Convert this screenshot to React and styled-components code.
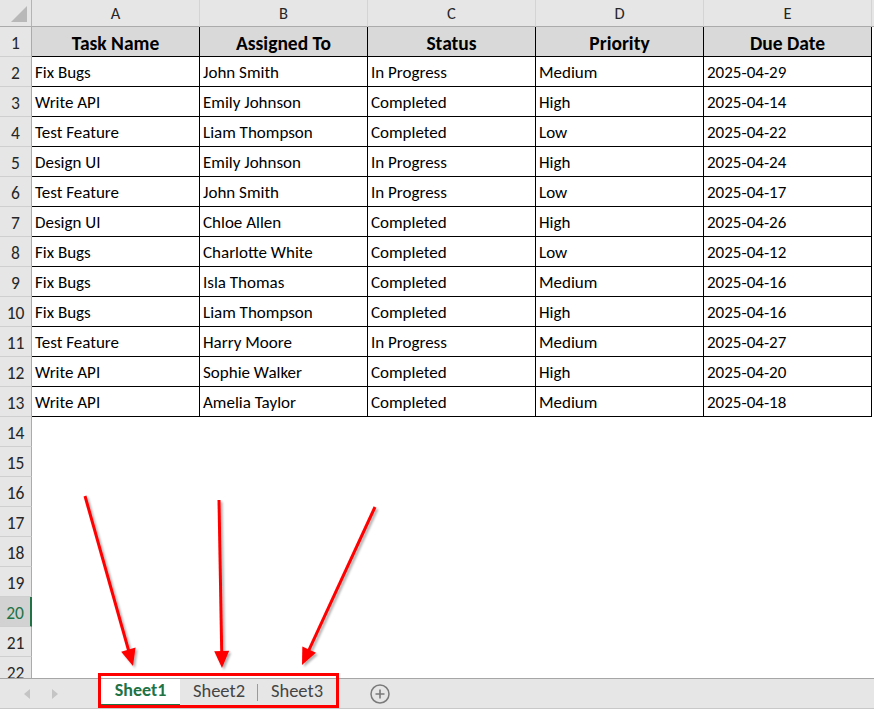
import React from "react";
import styled, {createGlobalStyle} from "styled-components";

const GlobalStyle = createGlobalStyle`
  html, body {
    margin: 0;
    padding: 0;
    background: #ffffff;
    overflow: hidden;
  }
  * {
    box-sizing: border-box;
  }
`;

const FONT = `Calibri, Carlito, Lato, "Noto Sans", sans-serif`;

const columns = ["A", "B", "C", "D", "E"];
const headers = ["Task Name", "Assigned To", "Status", "Priority", "Due Date"];

const rows = [
    ["Fix Bugs", "John Smith", "In Progress", "Medium", "2025-04-29"],
    ["Write API", "Emily Johnson", "Completed", "High", "2025-04-14"],
    ["Test Feature", "Liam Thompson", "Completed", "Low", "2025-04-22"],
    ["Design UI", "Emily Johnson", "In Progress", "High", "2025-04-24"],
    ["Test Feature", "John Smith", "In Progress", "Low", "2025-04-17"],
    ["Design UI", "Chloe Allen", "Completed", "High", "2025-04-26"],
    ["Fix Bugs", "Charlotte White", "Completed", "Low", "2025-04-12"],
    ["Fix Bugs", "Isla Thomas", "Completed", "Medium", "2025-04-16"],
    ["Fix Bugs", "Liam Thompson", "Completed", "High", "2025-04-16"],
    ["Test Feature", "Harry Moore", "In Progress", "Medium", "2025-04-27"],
    ["Write API", "Sophie Walker", "Completed", "High", "2025-04-20"],
    ["Write API", "Amelia Taylor", "Completed", "Medium", "2025-04-18"],
];

const TOTAL_ROWS = 22;
const ACTIVE_ROW = 20;

// region layout
const Window = styled.div`
  position: relative;
  width: 874px;
  height: 709px;
  display: flex;
  flex-direction: column;
  font-family: ${FONT};
  background: #ffffff;
  overflow: hidden;
`;

const SheetArea = styled.div`
  flex: 1;
  min-height: 0;
  overflow: hidden;
`;

const Grid = styled.div`
  display: grid;
  grid-template-columns: 32px repeat(5, 168px) 1fr;
  grid-template-rows: 27px;
  grid-auto-rows: 30px;
`;

const Corner = styled.div`
  background: #e6e6e6;
  border-right: 1px solid #b4b4b4;
  border-bottom: 1px solid #ababab;
  position: relative;

  &::after {
    content: "";
    position: absolute;
    right: 4px;
    bottom: 4px;
    width: 0;
    height: 0;
    border-left: 16px solid transparent;
    border-bottom: 16px solid #b8b8b8;
  }
`;

const ColHead = styled.div`
  background: #e6e6e6;
  border-right: 1px solid #d4d4d4;
  border-bottom: 1px solid #ababab;
  display: flex;
  align-items: center;
  justify-content: center;
  font-size: 16.5px;
  color: #262626;
`;

const RowHead = styled.div`
  background: ${({$active}) => $active ? "#d2d2d2" : "#e6e6e6"};
  color: ${({$active}) => $active ? "#217346" : "#262626"};
  border-right: ${({$active}) => $active ? "2px solid #217346" : "1px solid #ababab"};
  border-bottom: 1px solid #cfcfcf;
  display: flex;
  align-items: center;
  justify-content: center;
  font-size: 17.5px;
  padding-top: 3px;
`;

const Cell = styled.div`
  display: flex;
  align-items: center;
  justify-content: ${({$header}) => $header ? "center" : "flex-start"};
  padding: 2px 3px 0;
  font-size: ${({$header}) => $header ? "19.5px" : "17px"};
  font-weight: ${({$header}) => $header ? 700 : 400};
  background: ${({$header}) => $header ? "#d9d9d9" : "#ffffff"};
  color: #000;
  white-space: nowrap;
  overflow: hidden;
  border-right: ${({$boxed}) => $boxed ? "1px solid #000" : "none"};
  border-bottom: ${({$boxed}) => $boxed ? "1px solid #000" : "none"};
`;

const Filler = styled.div`
  background: ${({$top}) => $top ? "#e6e6e6" : "#ffffff"};
  border-bottom: ${({$top}) => $top ? "1px solid #ababab" : "none"};
`;

// endregion

// region tab bar
const TabBar = styled.div`
  height: 31px;
  flex-shrink: 0;
  background: #e6e6e6;
  border-top: 1px solid #a6a6a6;
  border-bottom: 1px solid #c8c8c8;
  display: flex;
  align-items: stretch;
`;

const Nav = styled.div`
  width: 101px;
  display: flex;
  align-items: center;
  padding-left: 24px;
  gap: 22px;
`;

const NavArrow = styled.span`
  width: 0;
  height: 0;
  border-top: 5px solid transparent;
  border-bottom: 5px solid transparent;
  ${({$dir}) => $dir === "left"
          ? "border-right: 6px solid #c4c4c4;"
          : "border-left: 6px solid #c4c4c4;"}
`;

const Tabs = styled.div`
  display: flex;
  align-items: stretch;
`;

const Tab = styled.div`
  width: ${({$w}) => $w}px;
  display: flex;
  align-items: center;
  justify-content: center;
  padding-bottom: 3px;
  font-size: ${({$active}) => $active ? "18px" : "18.5px"};
  font-weight: ${({$active}) => $active ? 800 : 400};
  color: ${({$active}) => $active ? "#217346" : "#444444"};
  background: ${({$active}) => $active ? "#ffffff" : "transparent"};
  border-bottom: ${({$active}) => $active ? "2px solid #217346" : "2px solid transparent"};
  margin-bottom: 2px;
  position: relative;

  ${({$sep}) => $sep && `
    &::after {
      content: "";
      position: absolute;
      right: 0;
      top: 5px;
      bottom: 3px;
      width: 1px;
      background: #9a9a9a;
    }
  `}
`;

const AddSheet = styled.div`
  margin-left: 33px;
  display: flex;
  align-items: center;
`;

// endregion

// region annotations
const Highlight = styled.div`
  position: absolute;
  left: 98px;
  top: 673px;
  width: 241px;
  height: 35px;
  border: 3px solid #ff0000;
  pointer-events: none;
`;

const Overlay = styled.svg`
  position: absolute;
  left: 0;
  top: 0;
  pointer-events: none;
`;

const arrows = [
    [85, 496, 133, 666],
    [219, 500, 222, 668],
    [375, 507, 302, 665],
];

const headPoints = (x1, y1, x2, y2) => {
    const len = 17;
    const half = 7.5;
    const dx = x2 - x1;
    const dy = y2 - y1;
    const d = Math.hypot(dx, dy);
    const ux = dx / d;
    const uy = dy / d;
    const bx = x2 - ux * len;
    const by = y2 - uy * len;
    return [
        [x2, y2],
        [bx - uy * half, by + ux * half],
        [bx + uy * half, by - ux * half],
    ].map(p => p.join(",")).join(" ");
};

const Arrows = () => (
    <Overlay width="874" height="709" viewBox="0 0 874 709">
        <defs>
            <filter id="shadow" x="-20%" y="-20%" width="140%" height="140%">
                <feDropShadow dx="2" dy="2" stdDeviation="1.2" floodColor="#000" floodOpacity="0.3"/>
            </filter>
        </defs>
        {arrows.map(([x1, y1, x2, y2], i) => {
            const d = Math.hypot(x2 - x1, y2 - y1);
            const ex = x2 - (x2 - x1) / d * 14;
            const ey = y2 - (y2 - y1) / d * 14;
            return (
                <g key={i} filter="url(#shadow)">
                    <line x1={x1} y1={y1} x2={ex} y2={ey} stroke="#ff0000" strokeWidth="3"/>
                    <polygon points={headPoints(x1, y1, x2, y2)} fill="#ff0000"/>
                </g>
            );
        })}
    </Overlay>
);

// endregion

const PlusIcon = () => (
    <svg width="22" height="22" viewBox="0 0 22 22">
        <circle cx="11" cy="11" r="9" fill="none" stroke="#7a7a7a" strokeWidth="1.5"/>
        <path d="M11 6.5v9M6.5 11h9" stroke="#7a7a7a" strokeWidth="1.6"/>
    </svg>
);

export default function App() {
    const gridRows = [];

    for (let r = 1; r <= TOTAL_ROWS; r++) {
        const isHeader = r === 1;
        const data = isHeader ? headers : rows[r - 2];
        gridRows.push(<RowHead key={`h${r}`} $active={r === ACTIVE_ROW}>{r}</RowHead>);
        columns.forEach((c, i) => {
            gridRows.push(
                <Cell key={`${c}${r}`} $header={isHeader} $boxed={!!data}>
                    {data ? data[i] : ""}
                </Cell>
            );
        });
        gridRows.push(<Filler key={`f${r}`}/>);
    }

    return (
        <>
            <GlobalStyle/>
            <Window>
                <SheetArea>
                    <Grid>
                        <Corner/>
                        {columns.map(c => <ColHead key={c}>{c}</ColHead>)}
                        <Filler $top/>
                        {gridRows}
                    </Grid>
                </SheetArea>
                <TabBar>
                    <Nav>
                        <NavArrow $dir="left"/>
                        <NavArrow $dir="right"/>
                    </Nav>
                    <Tabs>
                        <Tab $w={79} $active>Sheet1</Tab>
                        <Tab $w={78} $sep>Sheet2</Tab>
                        <Tab $w={78}>Sheet3</Tab>
                    </Tabs>
                    <AddSheet>
                        <PlusIcon/>
                    </AddSheet>
                </TabBar>
                <Arrows/>
                <Highlight/>
            </Window>
        </>
    );
}
